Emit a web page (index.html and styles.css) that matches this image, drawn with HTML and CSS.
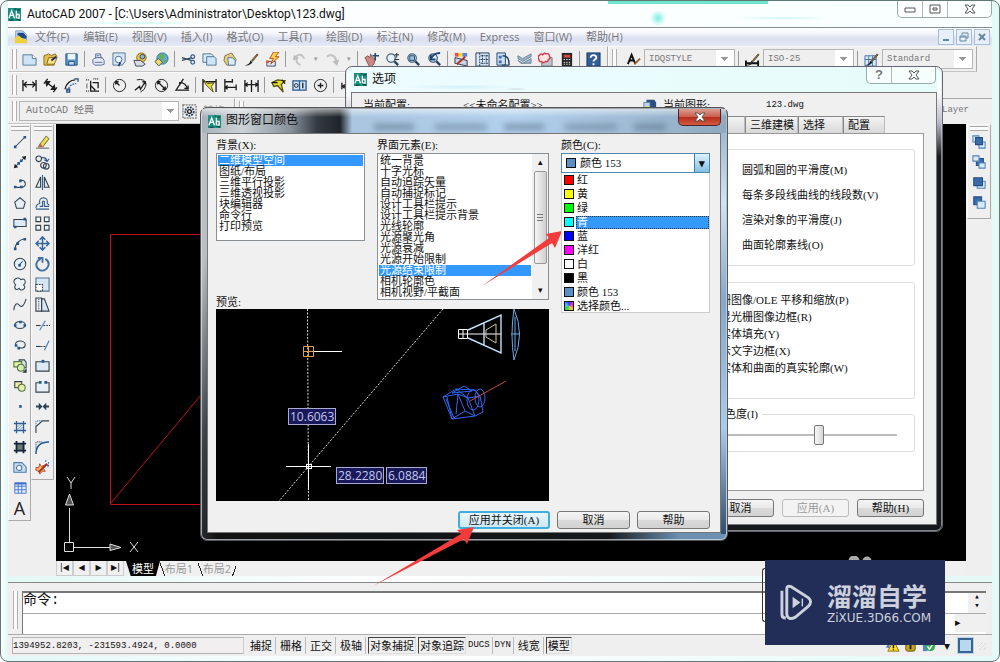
FILE: index.html
```html
<!DOCTYPE html>
<html lang="zh-CN">
<head>
<meta charset="utf-8">
<title>AutoCAD 2007</title>
<link rel="stylesheet" href="styles.css">
</head>
<body>
<svg class="defs" aria-hidden="true">
  <symbol id="logo" viewBox="0 0 14 14"><rect width="14" height="14" fill="#1d8f80"/><path d="M1 11 4 3l3 8M2.500 8h3M9 3v8M9 7h3v4H9" fill="none" stroke="#fff" stroke-width="1.400"/><path d="M7 1h2M10 2h3M2 13h4M9 12l4 1" stroke="#0a4a44" stroke-width="1.300"/></symbol>
  <symbol id="close" viewBox="0 0 12 10"><path d="M1 1h3l2 2 2-2h3L8 5l3 4H8L6 7 4 9H1l3-4z" fill="#fff" stroke="#555" stroke-width="1"/></symbol>
  <symbol id="printer" viewBox="0 0 16 16"><path d="M5 7V2h5l1 5M2 8l3-2h7l2 3v4l-3 1H4l-2-2z" fill="#e4eaf5" stroke="#566a99"/><path d="M4 11h8M6 4h3" stroke="#566a99"/></symbol>
  <symbol id="sheets" viewBox="0 0 16 16"><path d="M1 2h9l2 2v7H1z" fill="#d8ecfa" stroke="#4a7298"/><path d="M5 5h8l2 2v7H5z" fill="#cfe6f8" stroke="#4a7298"/></symbol>
  <symbol id="lens" viewBox="0 0 16 16"><circle cx="6.500" cy="6.500" r="4.500" fill="#e4f4fd" stroke="#48667f" stroke-width="1.400"/><path d="m10 10 4 4" stroke="#28405c" stroke-width="2.400"/></symbol>
  <symbol id="pencil" viewBox="0 0 16 16"><path d="M1 14c3 0 5-2 6-5l2 2c-2 3-5 4-8 3z" fill="#222"/><path d="m8 9 6-7 1 1-6 7z" fill="#a6633a" stroke="#553"/></symbol>
  <symbol id="region" viewBox="0 0 16 16"><path d="M4 1v14M12 1v14M1 4h14M1 12h14" stroke="#315e94" stroke-width="1.500"/><path d="m5 11 6-6M5 8l3-3M8 11l3-3" stroke="#5e90c4"/></symbol>
</svg>

<div class="app">
  <header class="titlebar">
    <svg class="app-logo"><use href="#logo"/></svg>
    <h1>AutoCAD 2007 - [C:\Users\Administrator\Desktop\123.dwg]</h1>
    <div class="caption">
      <button aria-label="最小化"><svg width="12" height="8"><path d="M1 3h10v4H1z" fill="#fff" stroke="#555"/></svg></button>
      <button aria-label="最大化"><svg width="12" height="10"><path d="M1 1h10v8H1z" fill="#fff" stroke="#555"/><path d="M4 4h4v2H4z" fill="none" stroke="#555"/></svg></button>
      <button class="wide" aria-label="关闭"><svg width="12" height="10"><use href="#close"/></svg></button>
    </div>
  </header>

  <nav class="menubar">
    <svg class="doc" viewBox="0 0 16 16"><path d="M2 1h8l4 4v9H2z" fill="#cde0f3" stroke="#6d8fb8"/><path d="M4 9V3h7l3 4v3z" fill="#1d4785"/><path d="M1 15V9l4-3 4 3 6 3v3z" fill="#f0cf3a"/></svg>
    <button>文件(F)</button><button>编辑(E)</button><button>视图(V)</button><button>插入(I)</button><button>格式(O)</button><button>工具(T)</button><button>绘图(D)</button><button>标注(N)</button><button>修改(M)</button><button>Express</button><button>窗口(W)</button><button>帮助(H)</button>
    <div class="mdi">
      <button aria-label="最小化文档"><svg width="10" height="10"><path d="M2 8h6" stroke="#6585a5" stroke-width="2"/></svg></button>
      <button aria-label="还原文档"><svg width="10" height="10"><path d="M3 3V1h6v5H7M1 4h6v5H1zM1 5h6" fill="none" stroke="#6585a5"/></svg></button>
      <button aria-label="关闭文档"><svg width="10" height="10"><path d="m2 2 6 6M8 2 2 8" stroke="#6585a5" stroke-width="2"/></svg></button>
    </div>
  </nav>

  <div class="toolrow">
    <div class="toolbar standard">
      <i class="grip"></i>
      <button aria-label="新建"><svg viewBox="0 0 16 16"><path d="M1 3h10l4 4v7H1z" fill="#cfe5f7" stroke="#55789b"/><path d="M11 3v4h4" fill="#fff" stroke="#55789b"/></svg></button>
      <button aria-label="打开"><svg viewBox="0 0 16 16"><path d="M1 14V4l5-2 3 2 4-2 2 3-5 3 2 6z" fill="#e5c24c" stroke="#876a1d"/><path d="m4 13 2-7h9l-3 7z" fill="#f8e48d" stroke="#876a1d"/><path d="m9 9 5-4" stroke="#226" stroke-width="2"/></svg></button>
      <button aria-label="保存"><svg viewBox="0 0 16 16"><path d="M2 2h12v12H2z" fill="#5f96cb" stroke="#1e4e83"/><path d="M4 2h8v6H4z" fill="#e9f4ff"/><path d="M5 10h6v4H5z" fill="#c5d6e8" stroke="#1e4e83"/></svg></button>
      <i class="sep"></i>
      <button aria-label="打印"><svg><use href="#printer"/></svg></button>
      <button aria-label="打印预览"><svg viewBox="0 0 16 16"><path d="M1 1h13v9l-3 4H1z" fill="#d4e7f6" stroke="#5a7590"/><circle cx="7" cy="8" r="3.500" fill="#eef9ff" stroke="#48667f"/><path d="m9 11-2 4" stroke="#28405c" stroke-width="2"/></svg></button>
      <button aria-label="发布"><svg viewBox="0 0 16 16"><circle cx="9" cy="6" r="5" fill="#e8c544" stroke="#846817"/><circle cx="10" cy="5" r="2.500" fill="#8cb8db" stroke="#345"/><path d="M1 9h7l5 4-3 2H3z" fill="#d7dce9" stroke="#445"/></svg></button>
      <button aria-label="三维 DWF"><svg viewBox="0 0 16 16"><circle cx="9" cy="7" r="6" fill="#67a9d5" stroke="#386d98"/><path d="M5 4c3-4 7-1 6 2L8 9zM10 9l4-1-2 4z" fill="#64b346"/><path d="m1 10 4-3 4 4-4 4z" fill="#f4db63" stroke="#456"/></svg></button>
      <i class="sep"></i>
      <button aria-label="剪切"><svg viewBox="0 0 16 16"><path d="m1 6 10 3M1 9l11-3" stroke="#2c4762" stroke-width="1.500"/><circle cx="12.500" cy="5" r="2" fill="none" stroke="#355d88" stroke-width="1.300"/><circle cx="12.500" cy="11" r="2" fill="none" stroke="#355d88" stroke-width="1.300"/></svg></button>
      <button aria-label="复制"><svg><use href="#sheets"/></svg></button>
      <button aria-label="粘贴"><svg viewBox="0 0 16 16"><path d="m2 4 7-3 5 7-2 6H4L1 9z" fill="#e3cf83" stroke="#85713c"/><path d="M5 6h5l3 3v5H6z" fill="#d9ebf7" stroke="#55789b"/></svg></button>
      <button aria-label="特性匹配"><svg><use href="#pencil"/></svg></button>
      <button aria-label="块编辑器"><svg viewBox="0 0 16 16"><path d="M2 10h9v5H2z" fill="#e3edf8" stroke="#446"/><path d="m9 0-4 7h4l-3 6 9-8h-4l4-5z" fill="#ffd14a" stroke="#b2521f"/><path d="M1 9h3v3H1z" fill="#dd5c36"/></svg></button>
      <i class="sep"></i>
      <button aria-label="放弃"><svg viewBox="0 0 16 16"><path d="M3 7c3-6 8-5 10 0M9 14C4 12 4 9 6 5" fill="none" stroke="#c5c5c5" stroke-width="2.200"/><path d="m1 9 1-6 5 4z" fill="#bbb"/></svg></button>
      <button class="drop" aria-label="放弃列表">▾</button>
      <button aria-label="重做"><svg viewBox="0 0 16 16"><path d="M2 5c5-4 10 0 10 6" fill="none" stroke="#c5c5c5" stroke-width="2.400"/><path d="m8 10 7-2-2 7z" fill="#bbb"/></svg></button>
      <button class="drop" aria-label="重做列表">▾</button>
      <i class="sep"></i>
      <button aria-label="平移"><svg viewBox="0 0 16 16"><path d="m1 6 3-2 2 2 1-4 2 4 3 1-1 5-3 4H6z" fill="#c98783" stroke="#8c5555"/><path d="M12 1v8M9 4h7" stroke="#24496f" stroke-width="1.600"/></svg></button>
      <button aria-label="缩放"><svg viewBox="0 0 16 16"><use href="#lens"/><path d="M10 3h5M12.500 1v5M10 8h5" stroke="#222"/></svg></button>
      <button aria-label="窗口缩放"><svg viewBox="0 0 16 16"><use href="#lens"/><path d="M4 4h5v5H4z" fill="#9bc1e0" stroke="#246"/></svg></button>
      <button aria-label="缩放上一个"><svg viewBox="0 0 16 16"><use href="#lens"/><path d="M14 1C9 1 7 3 4 7m0-4v5h5" fill="none" stroke="#1d4676" stroke-width="2"/></svg></button>
      <i class="sep"></i>
      <button aria-label="特性"><svg viewBox="0 0 16 16"><path d="M1 1h4v4H1z" fill="#f44"/><path d="M5 1h4v4H5z" fill="#fd2"/><path d="M9 1h5v4H9z" fill="#5483e6"/><path d="m1 6 13 3v6L1 12z" fill="#c6d3e5" stroke="#334"/><path d="m3 13 9-8" stroke="#a32" stroke-width="2"/></svg></button>
      <button aria-label="设计中心"><svg viewBox="0 0 16 16"><path d="M1 1h14v14H1z" fill="#dce9f6" stroke="#223b5d"/><path d="M5 1v14M8 3v10M12 3v10M6 4h8M6 8h8M6 12h8" stroke="#223b5d" stroke-dasharray="2 1"/></svg></button>
      <button aria-label="工具选项板"><svg viewBox="0 0 16 16"><path d="M1 1h9v13H1z" fill="#cde1f4" stroke="#24476d"/><path d="M3 4h3v3H3zM3 9h3v3H3z" fill="#3a6ca5"/><path d="M7 4c6 0 7 4 7 10M6 14h8" fill="none" stroke="#24476d" stroke-width="1.500"/></svg></button>
      <button aria-label="图纸集"><svg viewBox="0 0 16 16"><path d="m1 4 5 3 9-5v3L6 10 1 7zM1 9l5 3 9-5v5H4z" fill="#9ab6ce" stroke="#6c8498"/></svg></button>
      <button aria-label="标记集"><svg viewBox="0 0 16 16"><path d="M4 6h11v9H4z" fill="#bdc5cd" stroke="#777"/><path d="M2 3q1-2 3 0 2-3 3-1 4-1 4 2 2 3-1 4 0 3-3 2-3 3-4 0-3 1-3-2-2-3 1-5z" fill="#ffe6e6" stroke="#d7364a" stroke-width="1.500"/></svg></button>
      <button aria-label="计算器"><svg viewBox="0 0 16 16"><path d="M3 1h11v14H3z" fill="#252525"/><path d="M5 3h7v3H5z" fill="#da4747"/><path d="M5 8h7M5 11h7M5 13h7" stroke="#eee" stroke-dasharray="1.500 1.200"/></svg></button>
      <i class="sep"></i>
      <button aria-label="帮助"><svg viewBox="0 0 16 16"><rect x="1" y="1" width="14" height="14" fill="#315f9a" stroke="#17375f"/><path d="M5 6c0-4 6-3 6 0 0 2-3 2-3 4M8 12v2" fill="none" stroke="#fff" stroke-width="2"/></svg></button>
    </div>
    <div class="toolbar styles">
      <i class="grip"></i>
      <button aria-label="文字样式"><svg viewBox="0 0 16 16"><path d="m2 13 4-10 4 10M3 9h6" fill="none" stroke="#111" stroke-width="2"/><path d="m9 13 6-6" stroke="#9a5b29" stroke-width="2"/></svg></button>
      <select class="combo" aria-label="文字样式列表"><option>IDQSTYLE</option></select>
      <i class="sep"></i>
      <button aria-label="标注样式"><svg viewBox="0 0 16 16"><path d="M1 9v6M14 9v6M1 12h13" stroke="#111" stroke-width="2"/><use href="#pencil"/></svg></button>
      <select class="combo" aria-label="标注样式列表"><option>ISO-25</option></select>
      <i class="sep"></i>
      <button aria-label="表格样式"><svg viewBox="0 0 16 16"><path d="M1 4h12v11H1zM1 8h12M5 4v11M9 4v11" fill="#d7e9fa" stroke="#4472ac"/><use href="#pencil"/></svg></button>
      <select class="combo" aria-label="表格样式列表"><option>Standard</option></select>
    </div>
  </div>

  <div class="toolrow">
    <div class="toolbar">
      <i class="grip"></i>
      <button aria-label="线性标注"><svg class="ink" viewBox="0 0 16 16"><path d="M1 2v12M15 2v12M2 7h12M5 4 2 7l3 3M11 4l3 3-3 3"/></svg></button>
      <button aria-label="对齐标注"><svg class="ink" viewBox="0 0 16 16"><path d="M5 1 1 6M15 10l-4 5M3 4l10 8"/><path d="M3 4h4L4 8zM13 12H9l3-4z" fill="#1d1d1d"/></svg></button>
      <button aria-label="弧长"><svg class="ink" viewBox="0 0 16 16"><path d="M1 12C2 6 7 2 12 2"/><path d="M4 14c1-5 4-8 9-8" stroke="#3c6fa3" stroke-dasharray="2 1"/><path d="M11 1h4v3M3 12h3v3H3z" stroke="#244f80"/></svg></button>
      <button aria-label="坐标"><svg class="ink" viewBox="0 0 16 16"><path d="M6 3v11h9M6 8l5 5M8 5h6v6"/><path d="M1 2h3M2 6v5M1 14h3M9 1h5" stroke-dasharray="1 1"/></svg></button>
      <i class="sep"></i>
      <button aria-label="半径"><svg class="ink" viewBox="0 0 16 16"><circle cx="8" cy="8" r="6.500" stroke-width="1"/><path d="m8 8-4-4M4 7V4h3"/></svg></button>
      <button aria-label="折弯"><svg class="ink" viewBox="0 0 16 16"><path d="M4 2q9-2 10 5-1 6-6 8" stroke-width="1"/><path d="m2 13 5-4 1 3 5-8M10 4h3v3"/></svg></button>
      <button aria-label="直径"><svg class="ink" viewBox="0 0 16 16"><circle cx="8" cy="8" r="6.500" stroke-width="1"/><path d="m4 4 8 8M4 7V4h3M9 12h3V9"/></svg></button>
      <button aria-label="角度"><svg class="ink" viewBox="0 0 16 16"><path d="m9 1-8 12h14M5 5q7 0 8 7M5 8V5h3M10 11h4v-3"/></svg></button>
      <i class="sep"></i>
      <button aria-label="快速标注"><svg class="ink" viewBox="0 0 16 16"><path d="M1 1v14M15 1v14M1 4h14"/><path d="m2 2 4 4 7-1-3 4 2 6-8-8z" fill="#e7df35" stroke="#554f10" stroke-width="1"/></svg></button>
      <button aria-label="基线"><svg class="ink" viewBox="0 0 16 16"><path d="M2 1v14M10 1v4M14 7v6M2 4h8M2 10h12M5 8l-3 2 3 2"/></svg></button>
      <button aria-label="连续"><svg class="ink" viewBox="0 0 16 16"><path d="M1 2v13M8 2v13M15 2v13M1 7h14M4 5 1 7l3 2M12 5l3 2-3 2"/></svg></button>
      <i class="sep"></i>
      <button aria-label="快速引线"><svg class="ink" viewBox="0 0 16 16"><path d="m1 5 6-3 8 1-4 4 2 8-6-7-4 1z" fill="#e4dc32" stroke="#554f10"/><path d="M1 5h6M12 2l3 4" stroke="#111"/></svg></button>
      <button aria-label="公差"><svg class="ink" viewBox="0 0 16 16"><path d="M1 3h14v10H1zM8 3v10" stroke="#28588f" fill="#d1e5f5"/><circle cx="4.500" cy="8" r="2" stroke-width="1"/><path d="M11.500 5v6"/></svg></button>
      <button aria-label="圆心标记"><svg class="ink" viewBox="0 0 16 16"><circle cx="8" cy="8" r="6.500" stroke-width="1"/><path d="M5 8h6M8 5v6"/></svg></button>
      <i class="sep"></i>
      <button aria-label="编辑标注"><svg class="ink" viewBox="0 0 16 16"><path d="M2 5v7M3 9h5M5 7 3 9l2 2"/></svg></button>
    </div>
  </div>

  <div class="toolrow">
    <div class="toolbar">
      <i class="grip"></i>
      <select class="combo workspace-combo" aria-label="工作空间"><option>AutoCAD 经典</option></select>
      <button aria-label="工作空间设置"><svg class="ink" viewBox="0 0 16 16"><path d="M1 1h14v14H1z" stroke="#777" stroke-dasharray="2 1"/><circle cx="8" cy="8" r="4.500" stroke="#334a66" stroke-width="2" stroke-dasharray="2 1"/><circle cx="8" cy="8" r="2"/></svg></button>
      <span class="faded">转换</span>
    </div>
    <div class="toolbar layers">
      <i class="grip"></i>
      <i class="bulb"></i><i class="bulb"></i><i class="bulb blue"></i><i class="bulb"></i>
    </div>
    <div class="bylayer">Layer</div>
  </div>

  <main class="workspace">
    <aside class="dock draw">
      <i class="hgrip"></i>
      <button aria-label="直线"><svg class="pen" viewBox="0 0 16 16"><path d="M2 14 14 2"/><path class="pt" d="M1 12h3v3H1zM12 1h3v3h-3z"/></svg></button>
      <button aria-label="构造线"><svg class="pen" viewBox="0 0 16 16"><path d="M2 14 14 2"/><path d="m1 15 1-5 4 4zM15 1l-1 5-4-4z" fill="#222" stroke="none"/><path class="pt" d="M5 8h3v3H5zM8 5h3v3H8z"/></svg></button>
      <button aria-label="多段线"><svg class="pen" viewBox="0 0 16 16"><path d="M2 13h8q5-1 4-5-1-4-6-3"/><path class="pt" d="M1 11h3v3H1zM8 11h3v3H8zM7 4h3v3H7z"/></svg></button>
      <button aria-label="正多边形"><svg class="pen" viewBox="0 0 16 16"><path d="m8 2 6 5-2 7H4L2 7z" fill="#e6eff6"/></svg></button>
      <button aria-label="矩形"><svg class="pen" viewBox="0 0 16 16"><path d="M1 4h14v8H1z" fill="#dcebf7"/><path class="pt" d="M12 2h3v3h-3zM1 11h3v3H1z"/></svg></button>
      <button aria-label="圆弧"><svg class="pen" viewBox="0 0 16 16"><path d="M2 14C3 7 7 3 14 2"/><path class="pt" d="M1 12h3v3H1zM4 6h3v3H4zM12 1h3v3h-3z"/></svg></button>
      <button aria-label="圆"><svg class="pen" viewBox="0 0 16 16"><circle cx="8" cy="8" r="6.500" fill="#e6f0f8"/><path d="m7 9 4-4" stroke="#2469ad"/><path class="pt" d="M6 8h3v3H6z"/></svg></button>
      <button aria-label="修订云线"><svg class="pen" viewBox="0 0 16 16"><path d="M3 2q4-2 6 1 5-2 5 3 0 2-2 3 3 3 0 5-3 2-5-1-4 3-5-1 0-2 1-3-4-4 0-7z" fill="#edf3f7"/></svg></button>
      <button aria-label="样条曲线"><svg class="pen" viewBox="0 0 16 16"><path d="M1 14c0-5 3-10 6-6s6 0 8-7"/></svg></button>
      <button aria-label="椭圆"><svg class="pen" viewBox="0 0 16 16"><ellipse cx="8" cy="8" rx="6" ry="4" fill="#e3eef7"/><path class="pt" d="M1 7h3v3H1zM12 7h3v3h-3zM7 3h3v3H7z"/></svg></button>
      <button aria-label="椭圆弧"><svg class="pen" viewBox="0 0 16 16"><path d="M3 9C1 2 13 2 14 7c0 5-4 5-8 4"/><path class="pt" d="M5 10h3v3H5zM2 7h3v3H2z"/></svg></button>
      <button aria-label="插入块"><svg class="pen" viewBox="0 0 16 16"><path d="M7 1h6l2 3v6H7z" fill="#d5e8f6"/><path d="M1 3h9v6H1z" fill="#e8efb0" stroke="#547b36"/><circle cx="9" cy="10" r="4" fill="#d7eaba" stroke="#547b36"/><path d="M15 12v3h-3z" fill="#111"/></svg></button>
      <button aria-label="创建块"><svg class="pen" viewBox="0 0 16 16"><path d="M2 3h8v7H2z" fill="#f2eaa6"/><circle cx="10" cy="10" r="4" fill="#e4edb6" stroke="#547b36"/></svg></button>
      <button aria-label="点"><svg class="pen" viewBox="0 0 16 16"><path class="pt" d="M7 7h3v3H7z"/></svg></button>
      <button aria-label="图案填充"><svg><use href="#region"/></svg></button>
      <button aria-label="渐变色"><svg viewBox="0 0 16 16"><path d="M4 4h9v9H4z" fill="#6d7c70"/><path d="M4 1v14M12 1v14M1 4h14M1 12h14" stroke="#14253c" stroke-width="2"/></svg></button>
      <button aria-label="面域"><svg class="pen" viewBox="0 0 16 16"><path d="M1 3h9l5 5v6H1z" fill="#c7dcef" stroke="#4b79aa"/><circle cx="7" cy="9" r="3" fill="#f7f7f7" stroke="#4b79aa"/></svg></button>
      <button aria-label="表格"><svg viewBox="0 0 16 16"><path d="M2 2h13v12H2zM2 6h13M2 10h13M6 2v12M10 2v12" fill="#ddebff" stroke="#4673c3"/><path d="M2 2h13v2H2z" fill="#4673c3"/></svg></button>
      <button class="letter" aria-label="多行文字">A</button>
    </aside>
    <aside class="dock modify">
      <i class="hgrip"></i>
      <button aria-label="删除"><svg viewBox="0 0 16 16"><path d="M1 14h14" stroke="#555"/><path d="m5 10 3 3 7-9-3-3z" fill="#e9d94d" stroke="#6d6840"/><path d="m3 12 3-3 2 4H4z" fill="#b95e55"/></svg></button>
      <button aria-label="复制对象"><svg class="pen" viewBox="0 0 16 16"><circle cx="4" cy="4" r="3"/><circle cx="9" cy="11" r="3"/><circle cx="12" cy="12" r="3"/><path d="M7 3q5-1 6 4M10 5l3 2 2-3" stroke="#24578d"/></svg></button>
      <button aria-label="镜像"><svg class="pen" viewBox="0 0 16 16"><path d="M6 2v11H1zM10 2v11h5z" fill="#dfeaf2"/><path d="M8 0v16" stroke="#316298"/></svg></button>
      <button aria-label="偏移"><svg class="pen" viewBox="0 0 16 16"><path d="M1 13q0-4 4-5-1-6 4-6 5 0 4 6 2 1 2 2M1 14h14M5 11h3V6q1-1 2 0v5h5" stroke="#315f91"/></svg></button>
      <button aria-label="阵列"><svg class="pen" viewBox="0 0 16 16"><path d="M1 1h5v5H1zM10 1h5v5h-5zM1 10h5v5H1zM10 10h5v5h-5z" fill="#edf3f7"/></svg></button>
      <button aria-label="移动"><svg class="pen" viewBox="0 0 16 16"><path d="M8 1v14M1 8h14M5 4l3-3 3 3M5 12l3 3 3-3M4 5 1 8l3 3M12 5l3 3-3 3" stroke="#3467a1" stroke-width="1.600"/></svg></button>
      <button aria-label="旋转"><svg class="pen" viewBox="0 0 16 16"><path d="M11 2q5 3 3 8-3 6-9 4-6-4-2-10l3-2M3 1h5v5" stroke="#41719f" stroke-width="2"/></svg></button>
      <button aria-label="缩放对象"><svg class="pen" viewBox="0 0 16 16"><path d="M1 1h14v14H1z" fill="#d5e6f5" stroke="#547693"/><path d="M1 8h7v7H1z" fill="#fff" stroke-dasharray="2 1"/></svg></button>
      <button aria-label="拉伸"><svg class="pen" viewBox="0 0 16 16"><path d="M7 2h3l5 13H7z" fill="#d5e6f5"/><path d="M1 1v14h6V1z"/><path d="M4 2v12" stroke-dasharray="1 1"/></svg></button>
      <button aria-label="修剪"><svg class="pen" viewBox="0 0 16 16"><path d="M1 8h5"/><path d="M9 8h7" stroke-dasharray="2 1"/><path d="m5 13 6-10" stroke="#557ed0"/></svg></button>
      <button aria-label="延伸"><svg class="pen" viewBox="0 0 16 16"><path d="M1 9h5"/><path d="M6 9h5" stroke-dasharray="2 1"/><path d="m10 13 5-10" stroke="#337ab2"/></svg></button>
      <button aria-label="打断于点"><svg class="pen" viewBox="0 0 16 16"><path d="M1 4h14v10H1z" fill="#dfebf4"/><path class="pt" d="M7 2h3v3H7z"/></svg></button>
      <button aria-label="打断"><svg class="pen" viewBox="0 0 16 16"><path d="M4 4H1v10h14V4h-3" fill="#e8f0f6"/><path class="pt" d="M4 2h3v3H4zM10 2h3v3h-3z"/></svg></button>
      <button aria-label="合并"><svg class="pen" viewBox="0 0 16 16"><path d="M1 8h4M11 8h4" stroke-width="2"/><path d="m4 4 4 4-4 4zM12 4 8 8l4 4z" fill="#25405c" stroke="none"/></svg></button>
      <button aria-label="倒角"><svg class="pen" viewBox="0 0 16 16"><path d="M1 15V8l7-6h7"/><path d="M1 7V2h6" stroke="#316ba5" stroke-dasharray="1 1"/></svg></button>
      <button aria-label="圆角"><svg class="pen" viewBox="0 0 16 16"><path d="M1 15C1 6 6 2 15 2" stroke="#205a96" stroke-width="1.600"/><path d="M1 9V2h7" stroke-dasharray="1 1"/></svg></button>
      <button aria-label="分解"><svg viewBox="0 0 16 16"><path d="m1 8 3 0 1-4 2 3 4-2-2 4 2 3-3 0-3 3-1-3-3-1z" fill="#f0b25a" stroke="#c14632"/><path d="m4 13 9-9" stroke="#9d2f26" stroke-width="2"/><path d="M11 1h1M14 3h1M13 6h2" stroke="#3569b1" stroke-width="2"/></svg></button>
    </aside>
    <section class="drawing">
      <svg class="canvas" viewBox="0 0 910 437" preserveAspectRatio="xMinYMin slice">
        <path d="M145 110.500H54.500v270H145M55 379l90-108" fill="none" stroke="#c0111b"/>
        <g fill="none" stroke="#ddd"><path d="M8.500 418.500h9v9h-9zM13.500 418V384M18 423.500h36"/><path d="m9.500 381 4-11 4 11zM54 420l11 3.500-11 3z" fill="#555"/><path d="m11 353 4 6 4-6M15 359v6M74 418l8 10M82 418l-8 10"/></g>
      </svg>
      <div class="tabs">
        <button aria-label="第一个">|◀</button><button aria-label="上一个">◀</button><button aria-label="下一个">▶</button><button aria-label="最后一个">▶|</button>
        <button class="sheet on">模型</button><button class="sheet">布局1</button><button class="sheet">布局2</button>
      </div>
    </section>
    <aside class="right">
      <div class="dock order">
        <i class="hgrip"></i>
        <button aria-label="前置"><svg class="pen" viewBox="0 0 16 16"><path d="M1 1h7v7H1zM8 8h7v7H8z" fill="#d6eaf9" stroke="#5482b2"/><path d="M4 3h8v8H4z" fill="#386ba7" stroke="#254f80"/></svg></button>
        <button aria-label="后置"><svg class="pen" viewBox="0 0 16 16"><path d="M5 4h8v8H5z" fill="#386ba7" stroke="#254f80"/><path d="M1 1h7v6H1zM8 9h7v6H8z" fill="#d6eaf9" stroke="#5482b2"/></svg></button>
        <button aria-label="置于对象之上"><svg class="pen" viewBox="0 0 16 16"><path d="M6 6h9v8H6z" fill="#d6eaf9" stroke="#5482b2"/><path d="M2 2h10v9H2z" fill="#386ba7" stroke="#254f80"/></svg></button>
        <button aria-label="置于对象之下"><svg class="pen" viewBox="0 0 16 16"><path d="M2 1h9v9H2z" fill="#386ba7" stroke="#254f80"/><path d="M6 6h9v8H6z" fill="#d6eaf9" stroke="#5482b2"/></svg></button>
      </div>
    </aside>
  </main>

  <section class="command">
    <i class="grip"></i>
    <div class="cmdbox">
      <div class="history"><label for="cmd">命令:</label><div class="spin"><span>▴</span><span>▾</span></div></div>
      <div class="entry"><input id="cmd" type="text"><span class="more">▸</span></div>
    </div>
  </section>

  <footer class="status">
    <output class="coords">1394952.8203, -231593.4924, 0.0000</output>
    <button>捕捉</button><button>栅格</button><button>正交</button><button>极轴</button><button class="down">对象捕捉</button><button class="down">对象追踪</button><button class="latin">DUCS</button><button class="latin">DYN</button><button>线宽</button><button class="down">模型</button>
    <div class="tray">
      <svg viewBox="0 0 16 16"><path d="M1 10 5 3v8z" fill="#5d83bd"/><path d="m9 3 6 11H3z" fill="#ffdf2b" stroke="#8b7300"/><path d="M9 7v4M9 12v1" stroke="#111" stroke-width="1.500"/></svg>
      <svg viewBox="0 0 16 16"><rect x="3" y="3" width="10" height="11" rx="2" fill="#c5a51c" stroke="#6a570b"/><path d="M8 5v7" stroke="#222" stroke-width="2"/></svg>
      <svg viewBox="0 0 16 16"><path d="M2 3h5v11H2z" fill="#5489b8"/><circle cx="10" cy="9" r="5" fill="#2fae4b"/><path d="m7 9 2 3 4-6" fill="none" stroke="#fff" stroke-width="1.600"/></svg>
      <span>▾</span>
      <button class="clean" aria-label="全屏显示"></button>
      <i class="resize"></i>
    </div>
  </footer>
</div>

<section class="window options" role="dialog" aria-label="选项">
  <div class="wtitle"><svg class="app-logo"><use href="#logo"/></svg><h2>选项</h2>
    <div class="caption"><button aria-label="帮助">?</button><button class="wide" aria-label="关闭选项"><svg width="12" height="10"><use href="#close"/></svg></button></div>
  </div>
  <div class="wbody">
    <div class="profile"><span>当前配置:</span><span>&lt;&lt;未命名配置&gt;&gt;</span><svg viewBox="0 0 16 16"><path d="M4 2h9l2 3v7H4z" fill="#295080"/><path d="M1 5h7v6H1z" fill="#bcd6ee" stroke="#57799d"/><path d="m3 10 3-1 7 5H4z" fill="#edd240"/></svg><span>当前图形:</span><span class="mono">123.dwg</span></div>
    <div class="opt-tabs"><button class="first" aria-label="草图"></button><button>三维建模</button><button>选择</button><button>配置</button></div>
    <div class="panel">
      <div class="group resolution"><p>圆弧和圆的平滑度(M)</p><p>每条多段线曲线的线段数(V)</p><p>渲染对象的平滑度(J)</p><p>曲面轮廓素线(O)</p></div>
      <div class="group perf"><p>栅图像/OLE 平移和缩放(P)</p><p>显光栅图像边框(R)</p><p>实体填充(Y)</p><p>示文字边框(X)</p><p>实体和曲面的真实轮廓(W)</p></div>
      <fieldset class="group fade"><legend><label for="fade">色度(I)</label></legend><input id="fade" type="range" min="0" max="100" value="58"></fieldset>
    </div>
    <div class="actions"><button>取消</button><button disabled>应用(A)</button><button>帮助(H)</button></div>
  </div>
</section>

<section class="window colors" role="dialog" aria-label="图形窗口颜色">
  <div class="wtitle"><svg class="app-logo"><use href="#logo"/></svg><h2>图形窗口颜色</h2>
    <button class="redclose" aria-label="关闭颜色"><svg width="12" height="10"><use href="#close"/></svg></button>
  </div>
  <div class="wbody">
    <div class="choosers">
      <div class="field"><h3 id="ctx">背景(X):</h3>
        <ul class="list" role="listbox" aria-labelledby="ctx"><li class="on">二维模型空间</li><li>图纸/布局</li><li>三维平行投影</li><li>三维透视投影</li><li>块编辑器</li><li>命令行</li><li>打印预览</li></ul></div>
      <div class="field"><h3 id="elem">界面元素(E):</h3>
        <div class="scrolled"><ul class="list" role="listbox" aria-labelledby="elem"><li>统一背景</li><li>十字光标</li><li>自动追踪矢量</li><li>自动捕捉标记</li><li>设计工具栏提示</li><li>设计工具栏提示背景</li><li>光线轮廓</li><li>光源聚光角</li><li>光源衰减</li><li>光源开始限制</li><li class="on">光源结束限制</li><li>相机轮廓色</li><li>相机视野/平截面</li></ul>
        <div class="sbar"><span>▴</span><i></i><span>▾</span></div></div></div>
      <div class="field"><label for="color">颜色(C):</label>
        <div class="picker"><i class="sw c153"></i><select id="color"><option>颜色 153</option></select><b>▾</b>
          <ul class="drop-list" role="listbox">
            <li><i class="sw red"></i><span>红</span></li><li><i class="sw yellow"></i><span>黄</span></li><li><i class="sw green"></i><span>绿</span></li><li class="on"><i class="sw cyan"></i><span>青</span></li><li><i class="sw blue"></i><span>蓝</span></li><li><i class="sw magenta"></i><span>洋红</span></li><li><i class="sw white"></i><span>白</span></li><li><i class="sw black"></i><span>黑</span></li><li><i class="sw c153"></i><span>颜色 153</span></li><li><i class="sw multi"></i><span>选择颜色...</span></li>
          </ul>
        </div></div>
    </div>
    <p class="plabel">预览:</p>
    <div class="preview">
      <svg viewBox="0 0 333 192">
        <path d="M91.500 0 92.500 192M227 0 63 192" fill="none" stroke="#ddd" stroke-dasharray="2 1.500"/>
        <path d="M98 42.500h28M70 157.500h45M92.500 135v46" stroke="#fff"/>
        <path d="M87.500 37.500h10v10h-10zM87 42.500h11M92.500 37v11" fill="none" stroke="#e2a04b"/>
        <rect x="90.500" y="155.500" width="5" height="4" fill="none" stroke="#fff"/>
        <g fill="none" stroke="#c3e1fa"><path d="M242.500 20.500h9v9h-9zM242 25h43M247 20v10" stroke="#fff"/><path d="m252 21 33-15v38l-33-15M268 14v22" stroke-width="1.400"/><path d="m270 21 10-6v19l-10-6z" stroke="#d6c68a"/><path d="M298 0q11 25 0 51-4-25 0-51zM295 25h9M299 8v34" stroke="#6aaeea"/></g>
        <g fill="none" stroke="#3367f5"><path d="m227 88 15-3 7 17-13 8zM227 88l13-8 19 1 5 6-12 2-10-4M252 89l7 18-10-5M236 110l23-3 8-4-3-16"/><ellipse cx="257" cy="91" rx="6" ry="10"/><ellipse cx="264" cy="89" rx="5" ry="9"/><path d="m230 90 8 19M240 80l12 9M248 77l-12 7 20-2zM242 85l-2 20M236 110l-5-22"/></g>
        <path d="m254 92 36-20" stroke="#c14a48"/>
      </svg>
      <span class="tip t1">10.6063</span><span class="tip t2">28.2280</span><span class="tip t3">6.0884</span>
    </div>
    <div class="actions"><button class="default">应用并关闭(A)</button><button>取消</button><button>帮助</button></div>
  </div>
</section>

<svg class="arrows" viewBox="0 0 1000 662" aria-hidden="true"><path d="m482 286 67-48-3-4 16-3-7 17-3-5zM373 586l88-52-4-4 17-3-7 17-3-5z" fill="#f33b3a"/></svg>

<div class="brand">
  <svg viewBox="0 0 36 38"><path d="M3 7v24q0 4 4 4M8 5q0-4 5-2l17 11q5 4 0 9L17 34q-8 4-9-3z" fill="none" stroke="#cdd1dd" stroke-width="3"/><path d="m14 13 8 6-8 6z" fill="#cdd1dd"/><path d="M24 15v8" stroke="#cdd1dd" stroke-width="1.500"/></svg>
  <div><strong>溜溜自学</strong><span>ZiXUE.3D66.COM</span></div>
</div>
</body>
</html>
```
FILE: styles.css
```css
* { box-sizing: border-box; }
body { margin: 0; overflow: hidden; background: #fff; font: 11px/12px "Liberation Serif", "Noto Sans CJK SC", serif; color: #111; }
button, select, input { font: inherit; color: inherit; margin: 0; }
button { padding: 0; border: 0; background: none; white-space: nowrap; }
p, h1, h2, h3, ul { margin: 0; padding: 0; font-weight: normal; list-style: none; }
svg { flex: none; }
.defs { position: absolute; width: 0; height: 0; }
.mono { font-family: "Liberation Mono", monospace; font-size: 9px; }

.app { min-height: 100vh; display: flex; flex-direction: column; padding: 0 7px 5px; border: 1px solid #607878; border-radius: 8px; background: linear-gradient(90deg, #fff, #e3f8f6 6px, #fff 400px, #e3faf6); }
.titlebar { height: 26px; display: flex; align-items: center; gap: 6px; background: radial-gradient(ellipse at 130px 22px, #c8faf4, transparent 70px), linear-gradient(#70e5cd, #70e5cd) 600px 0 / 160px 3px no-repeat, radial-gradient(circle at 650px 17px, #7deee2, transparent 8px), radial-gradient(ellipse at 775px 17px, #b9f1f5, transparent 50px), linear-gradient(90deg, #fff, #f8ffff); }
.app-logo { width: 13px; height: 13px; }
.titlebar h1 { flex: 1; font: 12px/16px Roboto, sans-serif; color: #111; }
.caption { align-self: flex-start; display: flex; height: 17px; border: 1px solid #9aa9aa; border-top: 0; border-radius: 0 0 5px 5px; background: #ffffff99; }
.caption button { width: 25px; display: grid; place-items: center; border-right: 1px solid #adb9b9; }
.caption .wide { width: 43px; border: 0; }

.menubar { height: 19px; display: flex; align-items: center; gap: 14px; padding: 0 2px 0 6px; border-top: 1px solid #848b92; background: linear-gradient(#fff, #f4f6fc 30%, #dbdff0 60%, #e5e8f5); font: 11px/16px "Open Sans", "Noto Sans CJK SC", sans-serif; color: #777; }
.doc { width: 14px; height: 14px; margin-right: -7px; }
.mdi { margin-left: auto; display: flex; gap: 2px; }
.mdi button { width: 16px; height: 16px; display: grid; place-items: center; border: 1px solid #a9bfd3; background: #e7f0f8; }

.toolrow { height: 26px; display: flex; background: #efefef; }
.toolbar { display: flex; align-items: center; padding-left: 3px; border: 1px solid #fafafa; border-right-color: #aaa; border-bottom-color: #c4c4c4; }
.toolbar button { width: 21px; height: 20px; display: grid; place-items: center; }
.toolbar button svg { width: 15px; height: 15px; }
.toolbar .drop { width: 12px; font-size: 7px; color: #999; }
.standard { padding-right: 3px; }
.grip { flex: none; width: 5px; height: 20px; margin-right: 2px; border: 1px solid #b0b0b0; border-width: 0 1px; background: #fafafa; }
.sep { flex: none; width: 1px; height: 16px; margin: 0 3px 0 2px; background: #999; }
.ink { fill: none; stroke: #1d1d1d; stroke-width: 1.4; }
.combo { width: 91px; height: 20px; padding: 0 4px; border: 1px solid #b5b5b5; border-radius: 0; appearance: none; background: conic-gradient(from -45deg at 50% 100%, #999 90deg, transparent 0) right 6px center / 7px 4px no-repeat, linear-gradient(90deg, #efefef 80%, #fff 80%); font-family: "Liberation Mono", "Noto Sans CJK SC", monospace; font-size: 9px; color: #777; }
.styles .grip { margin-right: 6px; }
.styles .sep { margin: 0 3px; }
.styles { padding-right: 3px; }
.workspace-combo { width: 160px; padding-left: 6px; font-size: 10px; background: conic-gradient(from -45deg at 50% 100%, #999 90deg, transparent 0) right 4px center / 7px 4px no-repeat, linear-gradient(90deg, #efefef 90%, #fff 90%); }
.faded { width: 34px; padding-left: 3px; color: #aaa; }
.layers { width: 120px; }
.bulb { width: 9px; height: 9px; margin-left: 7px; border-radius: 50%; border: 1px solid #aaa26a; background: #e5dc78; }
.bulb.blue { background: #a7bacb; }
.bylayer { margin-left: auto; width: 54px; padding: 5px 4px 0; border-top: 1px solid #aaa; font: 9px/12px "Liberation Mono", monospace; color: #777; }

.workspace { flex: 1; display: flex; background: #efefef; }
.dock { align-self: flex-start; width: 23px; display: flex; flex-direction: column; align-items: center; border: 1px solid #fafafa; border-right-color: #aaa; border-bottom-color: #aaa; padding-bottom: 2px; }
.dock button { height: 20px; width: 20px; display: grid; place-items: center; flex: none; }
.dock button:nth-of-type(3n) { height: 21px; }
.dock svg { width: 14px; height: 14px; }
.dock .letter { font: 18px/18px "Open Sans", sans-serif; color: #222; }
.modify { margin-right: 2px; }
.modify svg { width: 15px; height: 15px; }
.hgrip { flex: none; width: 18px; height: 5px; margin: 1px 0; border: 1px solid #aaa; border-width: 1px 0; background: #fafafa; }
.pen { fill: none; stroke: #35434e; stroke-width: 1.2; }
.pt { fill: #25588f; stroke: none; }
.drawing { flex: 1; display: flex; flex-direction: column; min-width: 0; }
.canvas { flex: 1; min-height: 0; width: 100%; background: #000; }
.tabs { height: 15px; display: flex; background: #f0f0f0; }
.tabs button { width: 17px; font: 8px/14px "DejaVu Sans", sans-serif; border: 1px solid #ccc; border-top: 0; }
.tabs .sheet { width: 38px; border: 0; background: linear-gradient(70deg, transparent 4px, #222 4px, #222 5px, transparent 5px); color: #999; font: 11px/14px "Open Sans", "Noto Sans CJK SC", sans-serif; }
.tabs .sheet:last-child { background: linear-gradient(70deg, transparent 4px, #222 4px, #222 5px, transparent 5px), linear-gradient(110deg, transparent 37px, #222 37px, #222 38px, transparent 38px); }
.tabs .sheet.on { margin-left: 2px; width: 34px; background: #000; color: #fff; clip-path: polygon(0 0, 100% 0, 88% 100%, 14% 100%); }
.right { width: 26px; padding: 0 1px; }
.order { width: 24px; padding-bottom: 5px; }

.command { height: 52px; display: flex; padding: 8px 6px 0 5px; margin-top: 6px; border-top: 1px solid #888; background: #efefef; }
.command .grip { height: 38px; }
.cmdbox { flex: 1; margin-left: 2px; border: 1px solid #777; border-width: 2px 0 0 1px; background: #fff; }
.history { height: 21px; display: flex; justify-content: space-between; border-bottom: 1px solid #aaa; font: 14px/14px "Liberation Mono", "Noto Sans CJK SC", monospace; }
.spin { width: 18px; display: flex; flex-direction: column; align-items: center; font-size: 9px; line-height: 9px; background: #f0f0f0; }
.entry { display: flex; height: 18px; }
.entry input { flex: 1; border: 0; outline: 0; padding: 0; background: none; }
.more { width: 31px; background: #f0f0f0; line-height: 17px; }

.status { height: 22px; display: flex; align-items: center; padding: 0 6px 0 4px; gap: 2px; border-top: 1px solid #aaa; background: #efefef; }
.coords { width: 232px; height: 17px; margin-right: 2px; padding: 2px 0; border: 1px solid #b4b4b4; border-right-color: #ccc; background: #f1efef; font: 9px/12px "Liberation Mono", monospace; }
.status > button { height: 17px; padding: 0 3px 0 2px; border-right: 1px solid #bbb; font-family: "Noto Sans CJK SC", sans-serif; font-size: 11px; line-height: 15px; }
.status > .latin { padding: 0 2px 0 0; font-family: "Liberation Mono", monospace; font-size: 9px; }
.status > .down { padding: 0 1px; border: 1px solid #ddd; border-top-color: #444; border-left-color: #444; }
.tray { margin-left: auto; display: flex; align-items: center; gap: 3px; height: 18px; }
.tray svg { width: 15px; height: 15px; }
.tray span { width: 16px; text-align: center; font-size: 12px; }
.clean { width: 15px; height: 15px; border: 2px solid #376491; outline: 1px solid #b9d2e9; background: #b9d8ef; }
.resize { width: 8px; height: 8px; margin-left: 2px; background: repeating-linear-gradient(135deg, #ddd 0 1px, transparent 1px 3px); }

.window { position: absolute; display: flex; flex-direction: column; border-radius: 7px; }
.wtitle { height: 26px; display: flex; align-items: center; gap: 5px; padding-left: 3px; position: relative; }
.wtitle h2 { flex: 1; padding-bottom: 4px; font: 12px/16px "Noto Sans CJK SC", sans-serif; z-index: 1; }
.wbody { flex: 1; background: #f0f0f0; border: 1px solid #777; }
.actions { display: flex; justify-content: flex-end; gap: 8px; }
.actions button { width: 67px; height: 18px; border: 1px solid #777; border-radius: 3px; background: linear-gradient(#f5f5f5, #eaeaea 48%, #dadada 50%, #d2d2d2); }
.actions button:disabled { border-color: #bbb; background: #f3f3f3; color: #999; }
.actions .default { border: 2px solid #42aee0; background: linear-gradient(#e8f6fc, #cde8f5); }

.options { left: 345px; top: 66px; width: 598px; height: 466px; padding: 0 5px 6px; border: 1px solid #667; background: linear-gradient(#e9fdfd, #fff 25px, #bbc 55px, #17191d 90px); box-shadow: inset 0 0 0 1px #ddd8; }
.options .wtitle { height: 25px; background: radial-gradient(ellipse at 110px 20px, #abdfee66, transparent 60px), radial-gradient(ellipse at 165px 22px, #69869a88, transparent 14px), linear-gradient(90deg, #eefcff, #e5fcfa); }
.options .caption { margin-right: 1px; font: bold 13px/16px "Liberation Sans", sans-serif; color: #777; }
.profile { display: flex; align-items: center; height: 23px; padding-left: 11px; }
.profile span:nth-of-type(1) { width: 100px; }
.profile span:nth-of-type(2) { width: 180px; }
.profile svg { width: 14px; height: 14px; margin-right: 6px; }
.profile span:nth-of-type(3) { width: 103px; }
.opt-tabs { display: flex; justify-content: flex-end; padding-right: 51px; }
.opt-tabs button { height: 17px; padding: 0 4px; border: 1px solid #888; border-bottom: 0; border-right-color: #bbb; background: linear-gradient(#f4f4f4, #d8d8d8); text-align: left; }
.opt-tabs button:nth-child(2) { width: 53px; }
.opt-tabs button:nth-child(3) { width: 45px; }
.opt-tabs button:nth-child(4) { width: 42px; }
.opt-tabs .first { width: 80px; }
.panel { height: 358px; margin: 0 12px 8px 6px; padding: 15px 8px 0; border: 1px solid #999; background: #fff; display: flex; flex-direction: column; align-items: flex-end; gap: 16px; }
.group { width: 203px; height: 117px; margin: 0; border: 1px solid #ddd; border-radius: 3px; }
.resolution { padding: 8px 0 0 29px; line-height: 25px; }
.perf { padding: 9px 0 0 7px; line-height: 17px; }
.fade { height: 44px; padding: 0; margin-top: -7px; }
.fade legend { padding: 0 4px 0 12px; }
.fade input { display: block; width: 184px; height: 20px; margin: 5px 0 0; appearance: none; background: linear-gradient(#bbb, #bbb) center / 100% 2px no-repeat; }
.fade input::-webkit-slider-thumb { appearance: none; width: 10px; height: 20px; border: 1px solid #777; border-radius: 2px; background: linear-gradient(90deg, #f8f8f8, #d5d5d5); }
.options .actions { padding-right: 12px; }

.colors { left: 200px; top: 107px; width: 528px; height: 434px; padding: 0 6px 7px; border: 1px solid #555; background: linear-gradient(100deg, #b8bec4 0 30px, #3c424a 60px, #111 90px, #15181c 80%, #6d90b0 92%); box-shadow: inset 0 0 0 1px #dfe9f0aa; }
.colors::before { content: ""; position: absolute; top: 2px; right: 1px; bottom: 6px; width: 5px; background: linear-gradient(#8facca, #cfe3f6 22%, #86a7c7 45%, #a9cbea 75%, #314f6d); }
.colors .wtitle { margin: 1px -5px 0; padding-left: 6px; height: 24px; background: linear-gradient(90deg, #a7b0b8, #ccd3d8 40px, #858e98 90px, #343a42 115px, #20242a 138px, #a9c5df 150px, #b3d2ee 60%, #8fa9c1); }
.colors .wtitle::after { content: ""; position: absolute; left: 172px; right: 60px; top: 15px; height: 6px; background: repeating-linear-gradient(90deg, #546b82 0 38px, transparent 42px 58px, #607890 64px 110px, transparent 116px 130px); filter: blur(3px); opacity: .6; }
.colors .wtitle::before { content: ""; position: absolute; inset: 0 0 auto; height: 8px; background: linear-gradient(#ffffff88, #ffffff00); }
.redclose { align-self: flex-start; z-index: 1; width: 43px; height: 17px; margin-right: 5px; display: grid; place-items: center; border: 1px solid #4c2528; border-top: 0; border-radius: 0 0 5px 5px; background: linear-gradient(#dc9d91, #cc5f50 48%, #b52b1b 50%, #d25b3e); }
.colors .wbody { padding: 4px 10px 0 8px; display: flex; flex-direction: column; }
.choosers { display: grid; grid-template-columns: 149px 172px 149px; gap: 12px; }
.field h3, .field label { display: block; height: 15px; font-size: 11px; line-height: 14px; }
.list { height: 88px; padding: 1px; border: 1px solid #8a8f94; background: #fff; }
.list li { height: 11px; line-height: 11px; padding: 0 1px; white-space: nowrap; }
.list .on { background: #3399ff; color: #fff; }
.scrolled { display: flex; height: 147px; border: 1px solid #8a8f94; background: #fff; }
.scrolled .list { flex: 1; height: 145px; border: 0; }
.sbar { width: 16px; display: flex; flex-direction: column; align-items: center; background: #f0f0f0; }
.sbar span { height: 17px; line-height: 17px; font-size: 9px; }
.sbar i { width: 13px; height: 93px; border: 1px solid #999; border-radius: 2px; background: repeating-linear-gradient(#777 0 1px, transparent 1px 3px) center / 6px 7px no-repeat, linear-gradient(90deg, #f5f5f5, #cfcfcf); }
.sbar span:last-child { margin-top: auto; }
.picker { position: relative; height: 20px; display: flex; align-items: center; border: 1px solid #4f87ad; background: #fff; }
.picker > .sw { margin-left: 4px; }
.picker select { flex: 1; appearance: none; border: 0; background: none; padding: 0 4px; outline: 0; }
.picker b { width: 15px; height: 18px; border-left: 1px solid #3c7fb1; background: linear-gradient(#dff2fc, #83c0e3); font-size: 11px; line-height: 18px; text-align: center; }
.sw { flex: none; width: 10px; height: 10px; border: 1px solid #111; }
.c153 { background: #5c8fc5; } .red { background: #f00; } .yellow { background: #ff0; } .green { background: #0f0; } .cyan { background: #0ff; } .blue { background: #00f; } .magenta { background: #f0f; } .white { background: #fff; } .black { background: #000; }
.multi { background: conic-gradient(#43f, #f3a, #fc3, #2d4, #3cf, #43f); }
.drop-list { position: absolute; z-index: 2; top: 19px; left: -1px; right: -1px; height: 140px; background: #fff; border: 1px solid #ccc; border-top: 0; }
.drop-list li { height: 14px; display: flex; align-items: center; gap: 2px; padding-left: 2px; }
.drop-list span { flex: 1; line-height: 13px; padding-left: 1px; }
.drop-list .on span { background: #3399ff; color: #fff; outline: 1px dotted #333; outline-offset: -1px; }
.plabel { margin-top: -5px; line-height: 14px; }
.preview { position: relative; width: 333px; background: #000; line-height: 0; }
.preview svg { width: 100%; }
.tip { position: absolute; height: 17px; padding: 0 1px; border: 1px solid #aaaad0; background: #18185b; color: #c4c8e8; font: 12px/15px "Open Sans", sans-serif; }
.t1 { left: 72px; top: 99px; } .t2 { left: 120px; top: 158px; } .t3 { left: 170px; top: 158px; }
.colors .actions { margin-top: 10px; gap: 7px; }
.colors .actions button { width: 73px; }
.colors .actions .default { width: 92px; }

.arrows { position: absolute; left: 0; top: 0; width: 1000px; height: 662px; pointer-events: none; }
.brand { position: absolute; left: 765px; top: 560px; width: 180px; height: 85px; display: flex; align-items: center; gap: 13px; padding-left: 14px; background: #222e57; color: #cdd1dd; }
.brand::before { content: ""; position: absolute; left: 83px; top: -4px; width: 25px; height: 4px; background: radial-gradient(circle at 6px 5px, #aaa 5px, transparent 6px), radial-gradient(circle at 19px 5px, #aaa 4px, transparent 5px); }
.brand::after { content: ""; position: absolute; left: -3px; top: 8px; width: 3px; height: 52px; border: 1px solid #333; border-right: 0; border-radius: 3px 0 0 3px; }
.brand svg { width: 35px; height: 37px; }
.brand div { display: flex; flex-direction: column; gap: 2px; }
.brand strong { font: bold 25px/30px "Noto Sans CJK SC", sans-serif; }
.brand span { font: 12px/13px "DejaVu Sans", sans-serif; }
```
